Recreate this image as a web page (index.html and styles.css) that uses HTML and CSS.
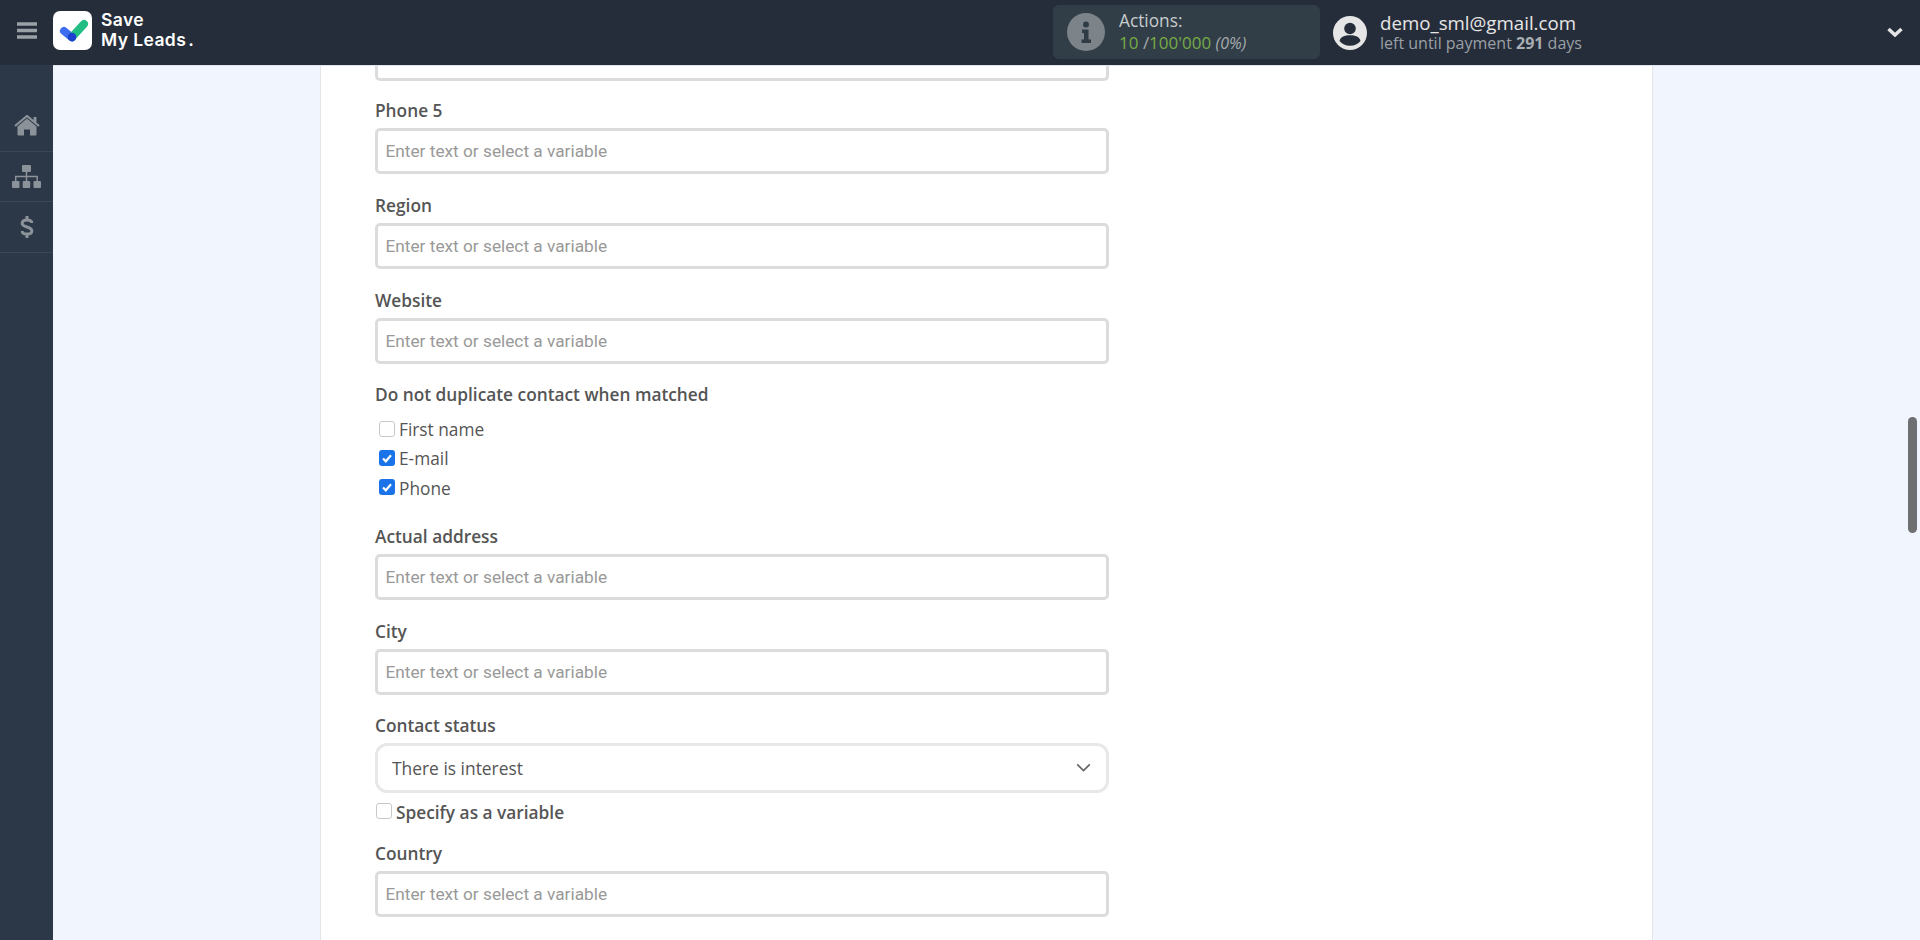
FILE: index.html
```html
<!DOCTYPE html>
<html lang="en">
<head>
<meta charset="utf-8">
<title>Save My Leads</title>
<link rel="stylesheet" href="styles.css">
</head>
<body>
<header class="topbar">
  <div class="brand">
    <svg class="burger" viewBox="0 0 20 17" width="20" height="17"><path d="M0 2h20M0 8.500h20M0 15h20" stroke="#99a0a6" stroke-width="3.300"/></svg>
    <div class="logo">
      <svg viewBox="0 0 38 38" width="38" height="38"><path d="M10 20l8 6.500" stroke="#3f6df0" stroke-width="8" stroke-linecap="round"/><path d="M18 26L30 13" stroke="#22bd82" stroke-width="8" stroke-linecap="round"/><circle cx="18" cy="26" r="4.300" fill="#1d3fd0"/></svg>
    </div>
    <div class="logotext">Save<br>My Leads<span class="dot">.</span></div>
  </div>
  <div class="account">
    <div class="actions">
      <svg class="info" viewBox="0 0 38 38" width="38" height="38"><circle cx="19" cy="19" r="19" fill="#7c8389"/><circle cx="19" cy="11.500" r="3" fill="#2f3c46"/><path d="M15 16.500h6.500v10H24V30H14.500v-3.500H17v-6.500h-2z" fill="#2f3c46"/></svg>
      <div class="actions-text">
        <div class="actions-title">Actions:</div>
        <div class="actions-value"><span class="green">10</span> <span class="slash">/</span><span class="green">100'000</span> <em class="pct">(0%)</em></div>
      </div>
    </div>
    <svg class="avatar" viewBox="0 0 34 34" width="34" height="34"><circle cx="17" cy="17" r="17" fill="#e6e6e6"/><circle cx="17" cy="12.500" r="5.800" fill="#262d3a"/><path d="M6.500 25c1-4.500 5-5.800 10.500-5.800s9.500 1.300 10.500 5.800c-2.500 3-6 4.800-10.500 4.800S9 28 6.500 25z" fill="#262d3a"/></svg>
    <div class="user">
      <div class="email">demo_sml@gmail.com</div>
      <div class="left">left until payment <b>291</b> days</div>
    </div>
  </div>
  <svg class="caret" viewBox="0 0 16 10" width="16" height="10"><path d="M1.500 2l6.500 6 6.500-6" fill="none" stroke="#e4e4e4" stroke-width="3.500"/></svg>
</header>
<div class="shell">
  <nav class="sidebar">
    <a class="navitem"><svg viewBox="0 0 26 21" width="26" height="21"><path d="M13 3.500L3.500 11.500V19.500a1 1 0 0 0 1 1H10v-6h6v6h5.500a1 1 0 0 0 1-1V11.500z" fill="#8b9299"/><path d="M1 11L13 1l12 10" fill="none" stroke="#8b9299" stroke-width="2.200"/><path d="M19.500 2h3v5h-3z" fill="#8b9299"/></svg></a>
    <a class="navitem"><svg viewBox="0 0 29 23" width="29" height="23"><rect x="10" y="0" width="9" height="7" rx="1" fill="#8b9299"/><rect x="0" y="16" width="7.500" height="7" rx="1" fill="#8b9299"/><rect x="10.700" y="16" width="7.500" height="7" rx="1" fill="#8b9299"/><rect x="21.500" y="16" width="7.500" height="7" rx="1" fill="#8b9299"/><path d="M14.500 7v9M3.700 16v-4.500h21.500V16" fill="none" stroke="#8b9299" stroke-width="1.500"/></svg></a>
    <a class="navitem"><svg viewBox="0 0 14 24" width="14" height="24"><path d="M11.800 8C11.800 5.800 9.500 5 7 5S2.200 6 2.200 8.300 4.500 11.300 7 12s4.800 1.600 4.800 3.900S9.500 19 7 19s-4.800-.9-4.800-3" fill="none" stroke="#8b9299" stroke-width="3"/><path d="M7 1v4M7 19v4" stroke="#8b9299" stroke-width="3"/></svg></a>
  </nav>
  <main class="main">
    <section class="panel">
      <div class="input input-cut"></div>
      <div class="field field-first"><label class="label">Phone 5</label><div class="input">Enter text or select a variable</div></div>
      <div class="field"><label class="label">Region</label><div class="input">Enter text or select a variable</div></div>
      <div class="field"><label class="label">Website</label><div class="input">Enter text or select a variable</div></div>
      <div class="field checks">
        <label class="label">Do not duplicate contact when matched</label>
        <div class="check"><span class="box"></span>First name</div>
        <div class="check"><span class="box on"><svg viewBox="0 0 16 16" width="16" height="16"><path d="M4 8.500l2.800 2.800L12 5.300" fill="none" stroke="#fff" stroke-width="2.200"/></svg></span>E-mail</div>
        <div class="check"><span class="box on"><svg viewBox="0 0 16 16" width="16" height="16"><path d="M4 8.500l2.800 2.800L12 5.300" fill="none" stroke="#fff" stroke-width="2.200"/></svg></span>Phone</div>
      </div>
      <div class="field"><label class="label">Actual address</label><div class="input">Enter text or select a variable</div></div>
      <div class="field"><label class="label">City</label><div class="input">Enter text or select a variable</div></div>
      <div class="field field-select">
        <label class="label">Contact status</label>
        <div class="select">There is interest
          <svg viewBox="0 0 16 10" width="15" height="9"><path d="M1 1.500l7 7 7-7" fill="none" stroke="#666" stroke-width="1.800"/></svg>
        </div>
        <div class="specify"><span class="box"></span>Specify as a variable</div>
      </div>
      <div class="field"><label class="label">Country</label><div class="input">Enter text or select a variable</div></div>
    </section>
  </main>
</div>
<div class="scrollthumb"></div>
</body>
</html>
```

FILE: styles.css
```css
* { box-sizing: border-box; }
html, body { height: 100%; }
body {
  margin: 0;
  height: 940px;
  overflow: hidden;
  display: flex;
  flex-direction: column;
  font-family: "Open Sans", sans-serif;
  color: #555;
  background: #f1f5fd;
}
.topbar {
  height: 65px;
  flex: none;
  background: #262d3a;
  display: flex;
  align-items: center;
  position: relative;
}
.brand { display: flex; align-items: center; width: 1053px; padding-bottom: 5px; }
.burger { margin-left: 17px; }
.logo {
  width: 39px;
  height: 39px;
  margin-left: 16px;
  background: #fff;
  border-radius: 7px;
  display: flex;
  align-items: center;
  justify-content: center;
}
.logotext {
  margin-left: 9px;
  font-family: "Inter", sans-serif;
  font-weight: 600;
  font-size: 17.500px;
  line-height: 20px;
  color: #fff;
  letter-spacing: 0.4px;
}
.dot { margin-left: 2px; }
.account { display: flex; align-items: center; }
.actions {
  width: 267px;
  height: 54px;
  margin-top: -1px;
  border-radius: 6px;
  background: #323e47;
  display: flex;
  align-items: center;
  padding-left: 14px;
}
.actions-text { margin-left: 14px; margin-top: -1px; }
.actions-title { font-size: 17.300px; line-height: 21px; color: #c8ccce; }
.actions-value { font-size: 17px; line-height: 21px; color: #a5abae; margin-top: 1px; }
.green { color: #76ab45; }
.slash { color: #a5abae; }
.pct { color: #a5abae; font-size: 16px; }
.avatar { margin-left: 13px; }
.user { margin-left: 13px; }
.email { font-size: 18.700px; line-height: 22px; color: #e6e6e6; margin-top: -1px; }
.left { font-size: 16px; line-height: 19px; color: #9aa0a6; }
.left b { color: #a9aeb3; }
.caret { position: absolute; right: 17px; top: 27px; }
.shell { flex: 1; display: flex; min-height: 0; }
.sidebar {
  width: 53px;
  flex: none;
  background: #2c3847;
  padding-top: 36px;
}
.navitem {
  display: flex;
  height: 50.500px;
  align-items: center;
  justify-content: center;
  border-bottom: 1px solid #3b4757;
}
.main {
  flex: 1;
  min-width: 0;
  overflow: hidden;
  padding-left: 267px;
  border-top: 1px solid #dfe4ee;
}
.panel {
  width: 1333px;
  height: 100%;
  background: #fff;
  border-left: 1px solid #e3e5e8;
  border-right: 1px solid #e3e5e8;
  padding-left: 54px;
}
.input {
  width: 734px;
  height: 46px;
  border: 3px solid #dcdcdc;
  border-radius: 5px;
  background: #fff;
  padding-left: 7.500px;
  font-family: "Roboto", sans-serif;
  font-size: 17.250px;
  line-height: 41px;
  color: #999;
  white-space: nowrap;
}
.input-cut {
  height: 15px;
  border-top: 0;
  border-radius: 0 0 5px 5px;
}
.field { margin-top: 20px; }
.field-first { margin-top: 18px; }
.label {
  display: block;
  font-size: 17.300px;
  font-weight: 600;
  line-height: 24px;
  margin-bottom: 5px;
  color: #555;
}
.checks { margin-top: 19px; }
.checks .label { margin-bottom: 7px; }
.check {
  display: flex;
  align-items: center;
  height: 29.300px;
  font-size: 17.300px;
  color: #555;
  padding: 2px 0 0 4px;
}
.box {
  width: 16px;
  height: 16px;
  border: 1px solid #c9c9c9;
  border-radius: 3px;
  background: #fff;
  margin: -2px 4px 0 0;
  flex: none;
  display: block;
}
.box svg { display: block; }
.box.on { background: #1a73e8; border: 0; }
.checks + .field { margin-top: 23px; }
.field-select { margin-top: 19px; }
.select {
  width: 734px;
  height: 50px;
  border: 3px solid #e8e8e8;
  border-radius: 12px;
  display: flex;
  align-items: center;
  justify-content: space-between;
  padding: 0 15px 0 14px;
  font-size: 17.400px;
  color: #555;
}
.specify {
  display: flex;
  align-items: center;
  margin-top: 10px;
  height: 20px;
  font-size: 17.300px;
  font-weight: 600;
}
.specify + * { margin-top: 0; }
.specify .box { margin-left: 1px; margin-right: 4px; margin-top: -4px; }
.field-select + .field { margin-top: 19px; }
.scrollthumb {
  position: absolute;
  left: 1908px;
  top: 417px;
  width: 9px;
  height: 116px;
  border-radius: 5px;
  background: #6e6f71;
}
```
